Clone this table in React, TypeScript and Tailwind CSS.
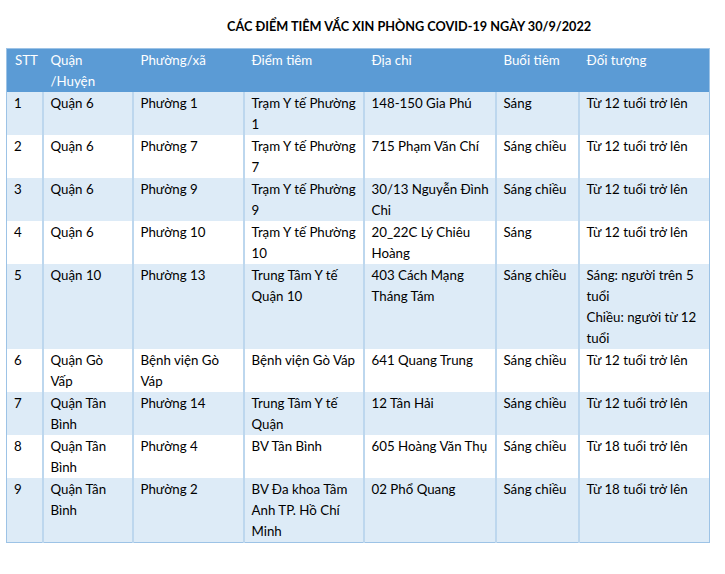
const rows: string[][] = [
  ['1', 'Quận 6', 'Phường 1', 'Trạm Y tế Phường 1', '148-150 Gia Phú', 'Sáng', 'Từ 12 tuổi trở lên'],
  ['2', 'Quận 6', 'Phường 7', 'Trạm Y tế Phường 7', '715 Phạm Văn Chí', 'Sáng chiều', 'Từ 12 tuổi trở lên'],
  ['3', 'Quận 6', 'Phường 9', 'Trạm Y tế Phường 9', '30/13 Nguyễn Đình Chi', 'Sáng chiều', 'Từ 12 tuổi trở lên'],
  ['4', 'Quận 6', 'Phường 10', 'Trạm Y tế Phường 10', '20_22C Lý Chiêu Hoàng', 'Sáng', 'Từ 12 tuổi trở lên'],
  ['5', 'Quận 10', 'Phường 13', 'Trung Tâm Y tế Quận 10', '403 Cách Mạng Tháng Tám', 'Sáng chiều', 'Sáng: người trên 5 tuổi\nChiều: người từ 12 tuổi'],
  ['6', 'Quận Gò Vấp', 'Bệnh viện Gò Váp', 'Bệnh viện Gò Váp', '641 Quang Trung', 'Sáng chiều', 'Từ 12 tuổi trở lên'],
  ['7', 'Quận Tân Bình', 'Phường 14', 'Trung Tâm Y tế Quận', '12 Tân Hải', 'Sáng chiều', 'Từ 12 tuổi trở lên'],
  ['8', 'Quận Tân Bình', 'Phường 4', 'BV Tân Bình', '605 Hoàng Văn Thụ', 'Sáng chiều', 'Từ 18 tuổi trở lên'],
  ['9', 'Quận Tân Bình', 'Phường 2', 'BV Đa khoa Tâm Anh TP. Hồ Chí Minh', '02 Phổ Quang', 'Sáng chiều', 'Từ 18 tuổi trở lên'],
];

const headers = ['STT', 'Quận /Huyện', 'Phường/xã', 'Điểm tiêm', 'Địa chỉ', 'Buổi tiêm', 'Đối tượng'];
const widths = ['w-[36px]', 'w-[90px]', 'w-[111px]', 'w-[120px]', 'w-[132px]', 'w-[83px]', 'w-[131px]'];

export default function App() {
  return (
    <div className="min-h-[574px] bg-white font-['Lato','Liberation_Sans',sans-serif] text-[13.3px] leading-[21px] text-black">
      <h1 className="pl-[227px] pt-[15px] pb-[11px] text-[12.7px] font-bold leading-[22px]">
        CÁC ĐIỂM TIÊM VẮC XIN PHÒNG COVID-19 NGÀY 30/9/2022
      </h1>
      <table className="ml-[6px] w-[703px] table-fixed border-collapse border border-[#9dc3e6]">
        <colgroup>
          {widths.map((w, i) => (
            <col key={i} className={w} />
          ))}
        </colgroup>
        <thead>
          <tr className="bg-[#5b9bd5] text-white">
            {headers.map((h, i) => (
              <th key={i} className="h-[43px] pl-[8px] pr-[4px] pt-[1px] text-left align-top font-normal">
                {i === 1 ? (
                  <>
                    Quận
                    <br />
                    /Huyện
                  </>
                ) : (
                  h
                )}
              </th>
            ))}
          </tr>
        </thead>
        <tbody>
          {rows.map((r, ri) => (
            <tr key={ri} className={ri % 2 === 0 ? 'bg-[#ddebf7]' : 'bg-white'}>
              {r.map((c, ci) => (
                <td
                  key={ci}
                  className="h-[43px] border-l-2 border-[#bdd7ee] pl-[7px] pr-[4px] pt-[1px] align-top whitespace-pre-line first:border-l-0"
                >
                  {c}
                </td>
              ))}
            </tr>
          ))}
        </tbody>
      </table>
    </div>
  );
}
